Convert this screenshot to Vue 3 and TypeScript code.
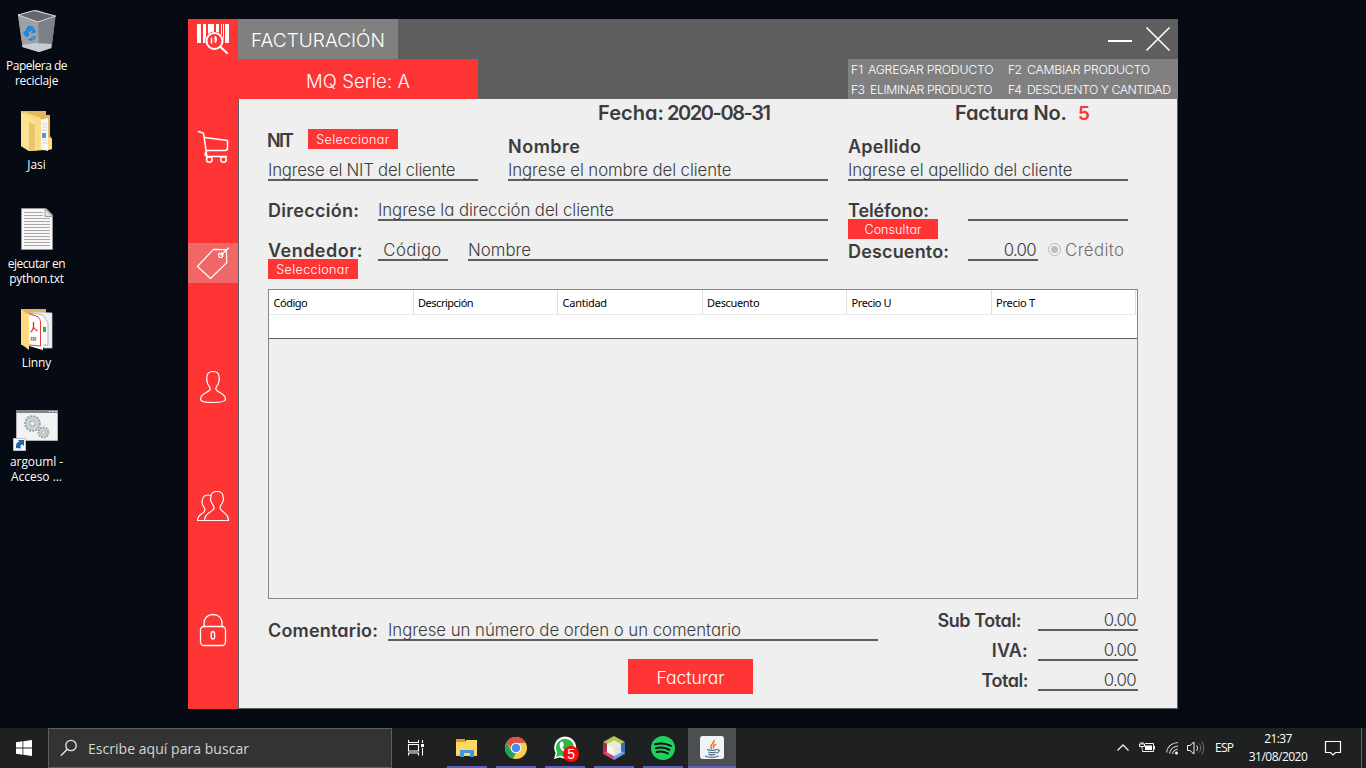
<script setup lang="ts">
interface DesktopItem { kind: string; lines: { text: string; width: number }[] }

const desktop: DesktopItem[] = [
  { kind: 'bin', lines: [{ text: 'Papelera de', width: 61.5 }, { text: 'reciclaje', width: 43.5 }] },
  { kind: 'folder', lines: [{ text: 'Jasi', width: 18.5 }] },
  { kind: 'text', lines: [{ text: 'ejecutar en', width: 58 }, { text: 'python.txt', width: 55 }] },
  { kind: 'pdf', lines: [{ text: 'Linny', width: 29.5 }] },
  { kind: 'batch', lines: [{ text: 'argouml -', width: 53 }, { text: 'Acceso ...', width: 51 }] },
]

const columns = [
  { name: 'Código', width: 34 },
  { name: 'Descripción', width: 55.5 },
  { name: 'Cantidad', width: 44.5 },
  { name: 'Descuento', width: 52.5 },
  { name: 'Precio U', width: 40 },
  { name: 'Precio T', width: 39 },
]

const totals = [
  { name: 'Sub Total:', width: 84, wide: true },
  { name: 'IVA:', width: 36, wide: false },
  { name: 'Total:', width: 47, wide: false },
]

const apps = ['explorer', 'chrome', 'whatsapp', 'netbeans', 'spotify', 'java']

// Tracks a run of text so that it occupies the given width in pixels.
const vFit = {
  mounted(el: HTMLElement, binding: { value: number }) {
    const range = document.createRange()
    range.selectNodeContents(el)
    const natural = range.getBoundingClientRect().width
    const gaps = (el.textContent ?? '').trim().length - 1
    if (gaps > 0) el.style.letterSpacing = `${(binding.value - natural) / gaps}px`
  },
}
</script>

<template>
  <div class="screen">
    <div class="workspace">
      <div class="desktop">
        <div v-for="d in desktop" :key="d.kind" class="shortcut">
          <div class="shortcut-icon" :class="d.kind">
            <svg v-if="d.kind === 'bin'" width="44" height="48" viewBox="15 6 44 48">
              <path d="M18 15 37 10 55.500 16 51.500 48 39 52 22.500 47Z" fill="#898e94" />
              <path d="M38 22 55.500 16 51.500 48 39 52Z" fill="#7c8188" />
              <path d="M18 15 38 22 39 52 22.500 47Z" fill="#9da2a7" />
              <path d="M18 15 34 10.500 55.500 16 38 22Z" fill="#65696d" stroke="#d8dbdd" />
              <path d="M22 45 35 43 51.500 44 51 48 39 52 22.500 47Z" fill="#c8cccf" />
              <path d="m26 30 2.500-4 4 .5-2 5zM23.500 32l4-1 1.500 4-3 2zM33 27l2.500 5-4 1M28 39.500l5 .5 2.500-4M30 40.500l3-4 2 2z" fill="#2586dd" stroke="#1b83dc" />
            </svg>
            <svg v-else-if="d.kind === 'folder'" width="34" height="44" viewBox="20 110 34 44">
              <path d="M21 111H46V115H50V136L52 139V149L47 150 29 151 21 146Z" fill="#dfb95b" />
              <path d="M40 120 48 118V151L40 149Z" fill="#f6f8f8" />
              <path d="M42 124h5M42 127h5M42 130h5M42 140h5M42 143h5" stroke="#b8c4ca" stroke-width=".7" />
              <path d="M42 133h4v5h-4z" fill="#4d9dcf" />
              <path d="M24 112 41 118V150L29 151Z" fill="#f7dc85" />
              <path d="M21 111 31 120 35 122 36 149 29 151 21 146Z" fill="#ffe291" />
              <path d="M29 122 35 125V149L29 151Z" fill="#e9c56b" />
              <path d="M48 137 52 139V149L48 150Z" fill="#ffdf82" />
            </svg>
            <svg v-else-if="d.kind === 'text'" width="34" height="44" viewBox="20 207 34 44">
              <path d="M21.500 208.500H46L52.500 215V249.500H21.500Z" fill="#f7f7f7" stroke="#969696" />
              <path d="M45 208.500V216.500H52.500Z" fill="#e2e2e2" stroke="#9b9b9b" />
              <path d="M24 212.500h19M24 215.500h19M24 218.500h26M24 221.500h26M24 224.500h26M24 227.500h26M24 230.500h26M24 233.500h26M24 236.500h26M24 239.500h26M24 242.500h26M24 245.500h26" stroke="#aaa" />
            </svg>
            <svg v-else-if="d.kind === 'pdf'" width="34" height="44" viewBox="20 308 34 44">
              <path d="M21 309H46V316L34 346 21 345Z" fill="#dfb45b" />
              <path d="M33 312 52 313V348H44L32 340Z" fill="#eef0f1" stroke="#c8ced1" stroke-width=".7" />
              <path d="M33 313 43 315 48 323V345L39 345Z" fill="#fafafa" stroke="#999" stroke-width=".7" />
              <path d="M42 327h4v5h-4z" fill="#35a56c" />
              <path d="M27 313 38 316 43 322V350L29 346Z" fill="#fff" />
              <path d="M28 313.500 36 316C39 317 40.500 319 40.500 323V346L29 345" fill="none" stroke="#ed3933" />
              <path d="M33.500 322v5c-1 3-2 5-3 5M33.500 327c1 3 3 3 4 4" fill="none" stroke="#dc413d" stroke-width="1.400" />
              <text x="30.500" y="341" font-size="5" font-weight="700" fill="#4f4848" textLength="6" lengthAdjust="spacingAndGlyphs">PDF</text>
              <path d="M21 309 29 316V350L21 344Z" fill="#ffda82" />
            </svg>
            <svg v-else width="50" height="46" viewBox="12 407 50 46">
              <path d="M16.500 410.500H57.500V440.500H16.500Z" fill="#f2f2f2" stroke="#aeb2b5" />
              <path d="M16 410h42v3H16z" fill="#80858a" />
              <path d="M49 411.500h2m1 0h2m1 0h2" stroke="#dfe3e4" />
              <circle cx="32.500" cy="423.500" r="7.300" fill="#c9d1d6" stroke="#929da5" stroke-width="2" stroke-dasharray="2 1.200" />
              <circle cx="32.500" cy="423.500" r="6.400" fill="#cdd4d8" />
              <circle cx="32.500" cy="423.500" r="2.700" fill="#f2f2f2" stroke="#929da5" />
              <circle cx="43.500" cy="432.500" r="5" fill="#cdd4d8" stroke="#929da5" stroke-width="2" stroke-dasharray="1.600 1.200" />
              <circle cx="43.500" cy="432.500" r="1.800" fill="#f2f2f2" stroke="#929da5" stroke-width=".8" />
              <path d="M13.500 438.500h12v12h-12z" fill="#f8f8f8" stroke="#b9c2c8" />
              <path d="M16 448c0-5 1-6 3.500-6l-1.500-2h6v6l-1.500-1.500c-2 0-2.500 1.500-1.500 4z" fill="#2563a9" />
            </svg>
          </div>
          <div v-for="l in d.lines" :key="l.text" class="shortcut-line"><span v-fit="l.width">{{ l.text }}</span></div>
        </div>
      </div>

      <div class="window">
        <aside class="sidebar">
          <div class="side-item brand">
            <svg width="50" height="40" viewBox="0 0 50 40">
              <path d="M9 5h4v19H9zM15 5h3v19h-3zM20 5h6v19h-6zM28 5h3v19h-3zM33 5h1v19h-1zM35 5h1v19h-1zM37 5h4v19h-4z" fill="#fff" />
              <circle cx="26.500" cy="22" r="9.500" fill="#ff3434" />
              <circle cx="26.500" cy="22" r="8" fill="none" stroke="#fff" stroke-width="2" />
              <path d="M23.500 18.500v6" stroke="#fff" stroke-width="1.500" />
              <path d="M26.500 17h1c2 1.500 2 5.500 0 7h-1z" fill="#fff" />
              <path d="m32.500 28 6.500 6" stroke="#fff" stroke-width="2.200" stroke-linecap="round" />
            </svg>
          </div>
          <div class="side-item cart">
            <svg width="50" height="40" viewBox="0 0 50 40" class="line" stroke-width="1.500">
              <path d="m10.500 4.500 5 1.800L19 30M17 10.500l22.500 3v7.500c0 1.500-1 2.500-2.500 2.500H18M19 29.500c-3-1-2-4 0-6M18.500 29.500h20" />
              <circle cx="21.300" cy="32.500" r="2.800" /><circle cx="35.500" cy="32.500" r="2.800" />
            </svg>
          </div>
          <div class="side-item tag">
            <svg width="50" height="40" viewBox="0 0 50 40" class="line" stroke-width="1.200">
              <path d="m9.500 23.500 16-17.200 12.800.3.500 13L22.500 35.500ZM33 12l7.500-7" />
              <circle cx="32.700" cy="12.300" r="2.200" />
            </svg>
          </div>
          <div class="side-item user">
            <svg width="50" height="40" viewBox="0 0 50 40" class="line" stroke-width="1.200">
              <path d="M19 10c0-3.500 1.800-5.500 6-5.500s6 2 6 5.500c1 2-.2 5-.8 7-1 2-2.400 3-2.400 5 0 3 9.700 4 9.700 10 0 2.500-3.500 3.500-12.500 3.500S12.500 34.500 12.500 32c0-6 9.700-7 9.700-10 0-2-1.400-3-2.400-5-.6-2-1.800-5-.8-7Z" />
            </svg>
          </div>
          <div class="side-item users">
            <svg width="50" height="40" viewBox="0 0 50 40" class="line" stroke-width="1.200">
              <path d="M23 10.500c0-3 1.500-5 6-5s6 2 6 5c1 2 0 5-.8 6.500-1 2-2.200 2-2.200 5 0 4 8.500 4 8.500 12.500h-24c0-8.500 9.500-8.500 9.500-12.500 0-3-1.200-3-2.200-5-.8-1.500-1.800-4.500-.8-6.500ZM23 9.500c-5-1.500-8.500.5-8.500 4.500-1 2 0 5 1 6.500 1 1.500 1.500 1.500 1.500 3.500 0 4-7.500 3-7.500 10.500h8" />
            </svg>
          </div>
          <div class="side-item lock">
            <svg width="50" height="40" viewBox="0 0 50 40" class="line" stroke-width="1.300">
              <path d="M16 16.500v-3C16 8 19.500 4.500 25 4.500s9 3.500 9 9v3" />
              <rect x="12.500" y="16.500" width="25" height="19" rx="3.500" />
              <rect x="23.200" y="21.800" width="3.400" height="7.200" rx="1.700" stroke-width="1.400" />
            </svg>
          </div>
        </aside>

        <div class="main">
          <header class="titlebar">
            <div class="title"><span v-fit="134">FACTURACIÓN</span></div>
            <div class="controls">
              <svg width="64" height="30" viewBox="0 0 64 30" fill="none" stroke="#fff">
                <path d="M0 17h24" stroke-width="2" /><path d="m38.500 3.500 23 23m0-23-23 23" stroke-width="1.600" />
              </svg>
            </div>
          </header>
          <div class="subbar">
            <div class="series"><span v-fit="104">MQ Serie: A</span></div>
            <div class="hints">
              <span class="key"><span v-fit="12">F1</span></span><span class="hint-a"><span v-fit="125.5">AGREGAR PRODUCTO</span></span>
              <span class="key"><span v-fit="14">F2</span></span><span><span v-fit="123">CAMBIAR PRODUCTO</span></span>
              <span class="key"><span v-fit="14">F3</span></span><span><span v-fit="122.5">ELIMINAR PRODUCTO</span></span>
              <span class="key"><span v-fit="14">F4</span></span><span><span v-fit="144">DESCUENTO Y CANTIDAD</span></span>
            </div>
          </div>

          <section class="form">
            <div class="meta">
              <span class="date-label"><b v-fit="66">Fecha:</b></span>
              <span class="date-value"><b v-fit="104">2020-08-31</b></span>
              <span class="invoice-label"><b v-fit="112">Factura No.</b></span>
              <b class="number">5</b>
            </div>

            <div class="row names">
              <div class="cell nit">
                <div class="head"><label class="nit-label"><b v-fit="27">NIT</b></label><button class="small"><span v-fit="73">Seleccionar</span></button></div>
                <div class="field"><span v-fit="187.5">Ingrese el NIT del cliente</span></div>
              </div>
              <div class="cell">
                <div class="head low"><label><b v-fit="72">Nombre</b></label></div>
                <div class="field"><span v-fit="223.5">Ingrese el nombre del cliente</span></div>
              </div>
              <div class="cell">
                <div class="head low"><label><b v-fit="73">Apellido</b></label></div>
                <div class="field"><span v-fit="224.5">Ingrese el apellido del cliente</span></div>
              </div>
            </div>

            <div class="row pair">
              <div class="caption"><label><b v-fit="91">Dirección:</b></label></div>
              <div class="field address"><span v-fit="236">Ingrese la dirección del cliente</span></div>
              <div class="caption right"><label><b v-fit="81">Teléfono:</b></label><button class="small"><span v-fit="57">Consultar</span></button></div>
              <div class="field phone"></div>
            </div>

            <div class="row pair">
              <div class="caption"><label><b v-fit="94.5">Vendedor:</b></label><button class="small"><span v-fit="73">Seleccionar</span></button></div>
              <div class="field code"><span v-fit="58">Código</span></div>
              <div class="field seller"><span v-fit="63">Nombre</span></div>
              <div class="caption right discount"><label><b v-fit="101">Descuento:</b></label></div>
              <div class="field amount"><span v-fit="33">0.00</span></div>
              <div class="credit"><i class="radio"></i><span v-fit="59">Crédito</span></div>
            </div>

            <div class="table">
              <div class="thead">
                <div v-for="c in columns" :key="c.name" class="th"><span v-fit="c.width">{{ c.name }}</span></div>
              </div>
              <div class="blank"></div>
            </div>

            <div class="footer">
              <div class="actions">
                <div class="comment">
                  <label><b v-fit="110">Comentario:</b></label>
                  <div class="field"><span v-fit="353">Ingrese un número de orden o un comentario</span></div>
                </div>
                <button class="submit"><span v-fit="68">Facturar</span></button>
              </div>
              <div class="totals">
                <div v-for="t in totals" :key="t.name" class="total">
                  <label :class="{ wide: t.wide }"><b v-fit="t.width">{{ t.name }}</b></label>
                  <div class="field amount"><span v-fit="33">0.00</span></div>
                </div>
              </div>
            </div>
          </section>
        </div>
      </div>
    </div>

    <footer class="taskbar">
      <div class="start">
        <svg width="16" height="16" viewBox="0 0 16 16" fill="#fff"><path d="M0 2.200 6.500 1.300v6.200H0zM7.300 1.200 16 0v7.500H7.300zM0 8.400h6.500v6.300L0 13.800zM7.300 8.400H16V16l-8.700-1.200z" /></svg>
      </div>
      <div class="search">
        <svg width="18" height="18" viewBox="0 0 18 18" fill="none" stroke="#e8e8e8" stroke-width="1.300"><circle cx="11" cy="6.500" r="5.200" /><path d="M7.300 10.200.8 16.800" /></svg>
        <span v-fit="161">Escribe aquí para buscar</span>
      </div>
      <div class="taskview">
        <svg width="18" height="18" viewBox="0 0 18 18" fill="none" stroke="#fff" stroke-width="1.100"><path d="M1.500 1v2.500h10V1M1.500 16.500V14h10v2.500M1.500 5.500h10v6.500h-10zM15.500 1v3M15.500 9v7.500" /><path d="M14 5h3v3h-3z" fill="#fff" stroke="none" /></svg>
      </div>
      <div v-for="a in apps" :key="a" class="app" :class="{ active: a === 'java' }">
        <svg v-if="a === 'explorer'" width="30" height="30" viewBox="0 0 30 30"><path d="M4 6h9v3H4z" fill="#dfa008" /><path d="M4 9h9l1-2h11v16H4z" fill="#ffd766" /><path d="M8 24v-7h14v7h-4v-4h-6v4z" fill="#3e99dc" /><path d="M4 21h4v2H4zM22 21h3v2h-3z" fill="#f8c853" /></svg>
        <svg v-else-if="a === 'chrome'" width="30" height="30" viewBox="0 0 30 30"><circle cx="15" cy="15" r="11" fill="#f8cf4b" /><path d="M5.500 9.500A11 11 0 0 1 24.600 9.700L15 10l-5 5z" fill="#dc5145" /><path d="M5.500 9.500 10.600 18 15 20l-3 5.600A11 11 0 0 1 5.500 9.500Z" fill="#1da260" /><circle cx="15" cy="15" r="5.300" fill="#fff" /><circle cx="15" cy="15" r="4.300" fill="#4b8bf5" /></svg>
        <svg v-else-if="a === 'whatsapp'" width="30" height="30" viewBox="0 0 30 30"><path d="m4 26 1.600-6A11 11 0 1 1 10 24.300z" fill="#fff" /><path d="m6 24 1.300-4.500A9 9 0 1 1 10.500 22.600z" fill="#2dbb46" /><path d="M10 10c2-3 3-1 4 2l-1.500 2c1 2 2 3 4 4l2-2 4 2c-1 4-4 4-8 1.500C11 17 9 14 10 10Z" fill="#fff" /><circle cx="21" cy="21" r="8" fill="#f90b09" /><text x="17.200" y="26" font-size="14" fill="#fff">5</text></svg>
        <svg v-else-if="a === 'netbeans'" width="30" height="30" viewBox="0 0 30 30"><path d="m15 3 11 6-11 6L4 9z" fill="#b2c84f" /><path d="M4 9l11 6v12L4 21z" fill="#a92e55" /><path d="m4 20 11-6v13z" fill="#dc4770" /><path d="m26 9-11 6v12l11-6z" fill="#3471b5" /><path d="m26 20-11-6v13z" fill="#67a7df" /><path d="m15 7.500 7 3.800v8L15 23l-7-3.700v-8z" fill="#f7f8ef" /><path d="m8 11.300 7 3.700 7-3.700-7-3.800z" fill="#e7ecd0" /><path d="m15 15 7-3.700v8L15 23z" fill="#dfe5e9" /></svg>
        <svg v-else-if="a === 'spotify'" width="30" height="30" viewBox="0 0 30 30"><circle cx="15" cy="15" r="12" fill="#1fd260" /><path d="M7 11.300c6-1.700 11-1 16 1.600M8 15.200c5-1.400 9-.7 13.500 1.600M8.700 19c4-1 7.500-.6 11 1.400" fill="none" stroke="#111" stroke-width="2" stroke-linecap="round" /></svg>
        <svg v-else width="30" height="30" viewBox="0 0 30 30"><rect x="3" y="3" width="24" height="23" rx="2.500" fill="#eff3f6" /><path d="M15 16c-4-4 3-5 2-9M17 15c-2-2 1-3 2-4" fill="none" stroke="#e46e2b" stroke-width="1.500" /><path d="M10 16.500c3 1 7 1 10 0M11 19c3 .8 6 .8 8 0M11.500 21.300c3 .7 5 .7 7 0M8 23c4 1.500 10 1.500 14 0M20 17c4-1 2 3-1 3" fill="none" stroke="#52718d" stroke-width="1.200" /></svg>
      </div>
      <div class="tray">
        <svg width="90" height="20" viewBox="1115 738 90 20" fill="none" stroke="#f2f2f2">
          <path d="m1117.500 750.500 5.500-5.500 5.500 5.500" stroke-width="1.300" />
          <path d="M1145 743.500h8.500v8h-11v-2M1154.500 746v3.500" /><path d="M1145 745.500h7v4.500h-7z" fill="#fff" stroke="none" /><path d="M1139.500 744h5v2.500h-5zM1141 742v2m2-2v2m-1 3v2" />
          <path d="M1166.500 752.500c1-6 5-9.500 11.500-10M1169.500 753.500c1-4.500 4-7 8.500-7.500M1172.500 754c.5-2.500 2.500-4.500 5.500-5" stroke="#ccc" stroke-width="1.200" /><circle cx="1176.500" cy="753" r="1.500" fill="#fff" stroke="none" />
          <path d="M1187.500 745.500h2.500l4-3.500v12l-4-3.500h-2.500z" /><path d="M1196.500 745.500c1.500 2 1.500 3.500 0 5.500" /><path d="M1199 743.500c2.500 3 2.500 6 0 9M1201.500 741.500c3 4 3 9 0 13" stroke="#777" />
        </svg>
        <span class="lang"><span v-fit="19">ESP</span></span>
        <div class="clock"><span v-fit="28">21:37</span><span v-fit="59">31/08/2020</span></div>
        <svg class="note" width="18" height="18" viewBox="0 0 18 18" fill="none" stroke="#fff" stroke-width="1.200"><path d="M1.500 2.500h15v11h-5L9 16l-2.500-2.500h-5z" /></svg>
        <i class="edge"></i>
      </div>
    </footer>
  </div>
</template>

<style>
html, body { margin: 0; overflow: hidden; background: #060b13; }
</style>

<style scoped>
.screen { width: 1366px; height: 768px; display: flex; flex-direction: column; background: #060b13; font-family: "Open Sans", "Noto Sans", sans-serif; box-sizing: border-box; }
.screen *, .screen *::before { box-sizing: border-box; }
svg { display: block; flex: none; }
span, b { white-space: nowrap; }
.workspace { height: 728px; display: flex; }

.desktop { width: 188px; padding-top: 8px; }
.shortcut { width: 74px; height: 99px; }
.shortcut-icon { height: 50px; width: 74px; display: flex; align-items: flex-start; justify-content: center; padding-top: 3px; }
.shortcut-icon.bin { padding-top: 0; }
.shortcut-icon.bin svg { margin-top: -2px; }
.shortcut-icon.text { padding-top: 1px; }
.shortcut-line { height: 15px; line-height: 16px; text-align: center; font-size: 12px; color: #fff; text-shadow: 1px 1px 1px #000; padding-right: 1px; }

.window { width: 990px; height: 690px; margin-top: 19px; display: flex; font-family: Inter, "Open Sans", sans-serif; font-feature-settings: "cv11" 1; font-weight: 300; color: #3c3c3c; font-size: 16.8px; }
.sidebar { width: 50px; background: #ff3434; display: flex; flex-direction: column; }
.side-item { height: 40px; flex: none; }
.line { fill: none; stroke: #fff; stroke-linejoin: round; stroke-linecap: round; }
.cart { margin-top: 68px; }
.tag { margin-top: 76px; background: #f16666; }
.user { margin-top: 84px; }
.users { margin-top: 79px; }
.lock { margin-top: 84px; }

.main { flex: 1; display: flex; flex-direction: column; }
.titlebar { height: 40px; background: #5f5f5f; display: flex; justify-content: space-between; }
.title { width: 160px; background: #808080; color: #fff; font-size: 19px; line-height: 43px; text-align: center; }
.controls { padding: 5px 6px 0 0; }
.subbar { height: 40px; background: #5f5f5f; display: flex; justify-content: space-between; }
.series { width: 240px; background: #ff3434; color: #fff; font-size: 18.5px; text-align: center; line-height: 44px; }
.hints { width: 330px; background: #808080; color: #fff; font-size: 12.3px; display: grid; grid-template-columns: 19px 138px 19px 1fr; grid-template-rows: 20px 20px; line-height: 22px; padding-left: 3px; }
.hint-a { margin-left: -2px; }

.form { flex: 1; background: #efefef; border: solid #5f6066; border-width: 0 1px 1px; padding: 0 39px 0 29px; }
label, .meta { font-weight: 600; }
label b, .meta b { font-weight: 600; }
label { display: block; font-size: 18px; line-height: 23px; height: 20px; }
.meta { height: 30px; line-height: 28px; font-size: 20px; display: flex; padding-left: 330px; }
.date-label { width: 69px; }
.date-value { width: 288px; }
.invoice-label { width: 123px; }
.number { color: #ff3434; font-size: 19px; line-height: 30px; }
button { border: 0; margin: 0; padding: 0; background: #ff3434; color: #fff; font: inherit; font-feature-settings: inherit; display: block; text-align: center; }
.small { width: 90px; height: 20px; font-size: 12.5px; line-height: 22px; font-weight: 300; }
.field { height: 22px; border-bottom: 2px solid #5f5f5f; line-height: 23px; }
.row { display: flex; }
.names { height: 70px; display: grid; grid-template-columns: 220px 320px 280px; column-gap: 20px; }
.names .nit { width: 210px; }
.head { height: 30px; display: flex; }
.nit-label { width: 40px; margin-left: -1px; margin-right: 1px; }
.low { padding-top: 6px; }
.pair { height: 40px; }
.caption { width: 110px; }
.caption.right { width: 120px; margin-left: 20px; }
.discount label { line-height: 25px; }
.address { width: 450px; }
.phone { width: 160px; }
.code { width: 70px; margin-right: 20px; text-align: center; padding-right: 1px; }
.seller { width: 360px; }
.amount { width: 70px; text-align: right; padding-right: 2px; }
.credit { display: flex; height: 22px; line-height: 23px; color: #707070; margin-left: 10px; gap: 4px; }
.radio { width: 13px; height: 13px; border-radius: 50%; margin-top: 4px; border: 1px solid #b5b5b5; background: radial-gradient(circle, #bfbfbf 0 3.300px, #f3f3f3 4px); }

.table { width: 870px; height: 310px; margin-top: 10px; border: 1px solid #828790; }
.thead { height: 25px; background: #fff; border-bottom: 1px solid #eaeaea; display: flex; padding-right: 1px; font-family: "Noto Sans", sans-serif; font-weight: 400; font-size: 11px; color: #000; }
.th { flex: 1; height: 24px; border-right: 1px solid #dfdfdf; padding-left: 4.6px; line-height: 25px; }
.blank { height: 24px; background: #fff; border-bottom: 1px solid #5f5f5f; }

.footer { display: flex; justify-content: space-between; padding-top: 10px; width: 870px; }
.actions { width: 610px; padding-top: 10px; }
.comment { display: flex; height: 40px; }
.comment label { width: 120px; }
.comment .field { width: 490px; }
.submit { width: 125px; height: 35px; margin-left: 360px; font-size: 17.5px; font-weight: 300; line-height: 37px; }
.totals { width: 240px; display: flex; flex-direction: column; gap: 8px; }
.total { display: flex; justify-content: flex-end; }
.total label { padding-right: 10px; }
.total label.wide { padding-right: 17px; }
.total .amount { width: 100px; }

.taskbar { height: 40px; background: #1e2022; display: flex; color: #fff; }
.start { width: 48px; padding: 12px 0 0 16px; }
.search { width: 344px; height: 40px; background: #333; border: 1px solid #5f5f5f; display: flex; align-items: center; padding-left: 11px; gap: 10px; font-size: 14px; color: #d6d6d6; }
.taskview { width: 50px; padding: 11px 0 0 15px; }
.app { width: 40px; height: 40px; margin-left: 5px; margin-right: 4px; display: flex; justify-content: center; padding-top: 5px; border-bottom: 2px solid #5960bd; font-family: "Liberation Sans", sans-serif; }
.app.active { width: 48px; background: #4c4e50; margin: 0 0 0 1px; }
.tray { flex: 1; display: flex; align-items: flex-start; font-size: 12px; padding-left: 379px; }
.tray > svg { margin-top: 10px; }
.lang { width: 33px; padding-left: 10px; line-height: 40px; }
.clock { width: 80px; display: flex; flex-direction: column; align-items: center; line-height: 18px; padding-top: 2px; }
.tray > .note { margin: 11px 0 0 6px; }
.edge { width: 1px; height: 40px; background: #666; margin-left: auto; margin-right: 4px; }
</style>
